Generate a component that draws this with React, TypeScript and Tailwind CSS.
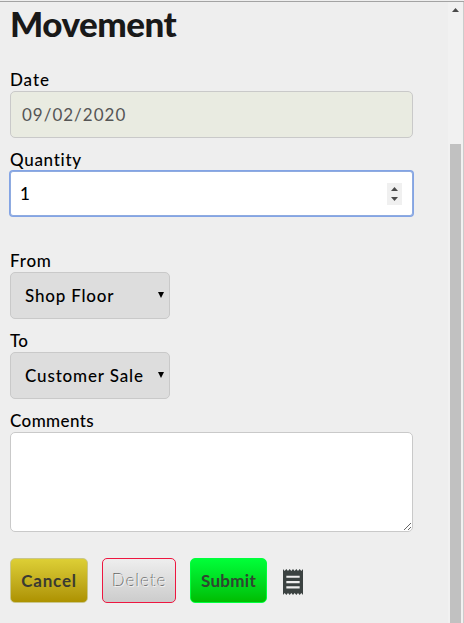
import { useState } from 'react';
import type { ReactNode } from 'react';
import { clsx } from 'clsx';

function Field({ label, spacing, children }: { label: string; spacing: string; children: ReactNode }) {
  return (
    <label className="block">
      <span className={clsx('block h-5 text-[17px] leading-[18px] font-medium whitespace-nowrap text-black', spacing)}>{label}</span>
      {children}
    </label>
  );
}

function LocationSelect({ options, spacing }: { options: string[]; spacing: string }) {
  return (
    <div className="relative h-[47px] w-[160px]">
      <select
        className={clsx(
          'block h-full w-full appearance-none rounded-[5px] border border-[#c9c9c9] bg-[#dddddd] pl-[14px] text-[17px] font-medium text-black outline-none',
          spacing,
        )}
      >
        {options.map((option) => (
          <option key={option}>{option}</option>
        ))}
      </select>
      <svg className="pointer-events-none absolute top-[20px] right-[6px] h-[6px] w-[6px]" viewBox="0 0 6 6">
        <path d="M0 0h6L3 6z" fill="#000" />
      </svg>
    </div>
  );
}

function ReceiptIcon() {
  return (
    <svg className="h-[26px] w-5" viewBox="3 2 18 20" preserveAspectRatio="none" fill="#3b4241">
      <path d="M18 17H6v-1.7h12zm0-4.1H6v-1.7h12zm0-4.1H6V7.1h12zM3 22l1.5-1.5L6 22l1.5-1.5L9 22l1.5-1.5L12 22l1.5-1.5L15 22l1.5-1.5L18 22l1.5-1.5L21 22V2l-1.5 1.5L18 2l-1.5 1.5L15 2l-1.5 1.5L12 2l-1.5 1.5L9 2 7.5 3.5 6 2 4.5 3.5 3 2z" fillRule="evenodd" />
    </svg>
  );
}

export default function App() {
  const [quantity, setQuantity] = useState(1);

  return (
    <div className="flex h-[623px] w-[464px] flex-col overflow-hidden bg-[#eeeeee] font-['Lato','Liberation_Sans',sans-serif]">
      <div className="h-[2px] shrink-0 border-b border-[#a3a3a3]" />
      <div className="flex min-h-0 flex-1">
        <form className="w-[448px] pl-[10px]" onSubmit={(e) => e.preventDefault()}>
          <h1 className="h-[69px] text-[35px] leading-[42px] font-black tracking-[-0.5px] text-[#191919]">Movement</h1>

          <div className="flex w-[403px] flex-col gap-[13px]">
            <Field label="Date" spacing="tracking-[0.9px]">
              <input
                readOnly
                value="09/02/2020"
                className="block h-[47px] w-full rounded-[5px] border border-[#c9c9c9] bg-[#e9ebe1] px-[11px] text-[17px] tracking-[1px] text-[#555555] outline-none"
              />
            </Field>

            <Field label="Quantity" spacing="tracking-[0.7px]">
              <div className="flex h-[45px] items-center justify-between rounded-[3px] border border-[#8fabe0] bg-white pr-[10px] pl-[9px] ring-1 ring-[#83a4e5]">
                <input
                  value={quantity}
                  onChange={(e) => setQuantity(Number(e.target.value) || 0)}
                  className="w-[200px] text-[17px] font-medium text-black outline-none"
                />
                <div className="flex h-[22px] w-[15px] flex-col items-center justify-between bg-[#f0f0f0] py-1">
                  <button type="button" aria-label="Increase" onClick={() => setQuantity(quantity + 1)}>
                    <svg className="block h-1 w-[7px]" viewBox="0 0 7 4">
                      <path d="M0 4h7L3.5 0z" fill="#4a4a4a" />
                    </svg>
                  </button>
                  <button type="button" aria-label="Decrease" onClick={() => setQuantity(quantity - 1)}>
                    <svg className="block h-1 w-[7px]" viewBox="0 0 7 4">
                      <path d="M0 0h7L3.5 4z" fill="#4a4a4a" />
                    </svg>
                  </button>
                </div>
              </div>
            </Field>

            <div className="mt-[23px]">
              <Field label="From" spacing="tracking-[0.8px]">
                <LocationSelect options={['Shop Floor']} spacing="tracking-[0.8px]" />
              </Field>
            </div>

            <Field label="To" spacing="tracking-[0.3px]">
              <LocationSelect options={['Customer Sale']} spacing="tracking-[0.85px]" />
            </Field>

            <Field label="Comments" spacing="tracking-[0.4px]">
              <textarea className="block h-[100px] w-full rounded-[5px] border border-[#c9c9c9] bg-white p-2 outline-none" />
            </Field>
          </div>

          <div className="mt-[26px] flex h-[45px] items-center text-[17px]">
            <button className="h-full w-[78px] rounded-[5px] border border-[#c9c68c] bg-linear-to-b from-[#ddcf35] to-[#ad9200] font-bold tracking-[0.8px] text-[#3a3a32]">
              Cancel
            </button>
            <button
              disabled
              className="ml-[14px] h-full w-[74px] rounded-[5px] border border-[#ed1740] bg-linear-to-b from-[#eeeeee] to-[#cccccc] pl-0.5 font-light tracking-[0.9px] text-[#f2f2f2] [text-shadow:-1px_-1px_0_#666666]"
            >
              Delete
            </button>
            <button className="ml-[14px] h-full w-[77px] rounded-[5px] border border-[#00ff3c] bg-linear-to-b from-[#00ff38] to-[#00bd00] font-bold tracking-[0.3px] text-[#2f4630]">
              Submit
            </button>
            <button aria-label="Receipt" className="mt-[3px] ml-4">
              <ReceiptIcon />
            </button>
          </div>
        </form>

        <div className="flex w-4 flex-col items-center border-r border-[#cccccc] bg-[#f1f1f1] pr-[3px] pl-[2px]">
          <svg className="mt-[6px] h-1 w-[7px] shrink-0" viewBox="0 0 7 4">
            <path d="M0 4h7L3.5 0z" fill="#4a4a4a" />
          </svg>
          <div className="mt-[132px] w-[11px] flex-1 bg-[#c1c1c1]" />
        </div>
      </div>
    </div>
  );
}
